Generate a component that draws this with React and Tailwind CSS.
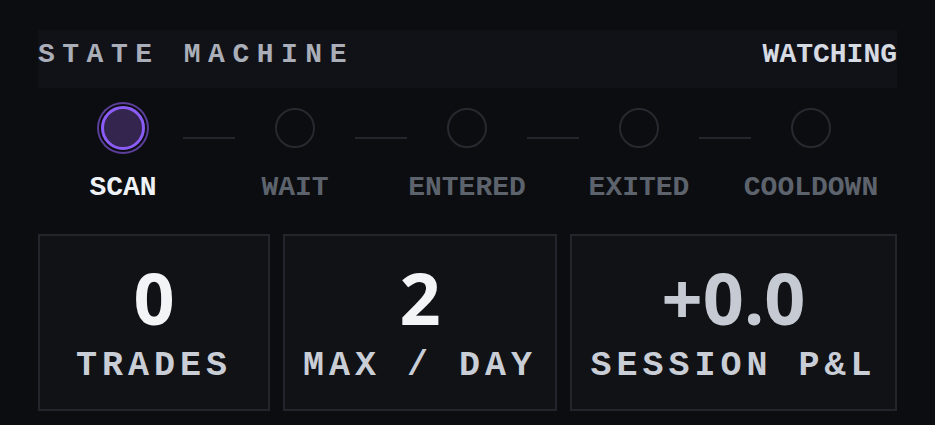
const steps = ['SCAN', 'WAIT', 'ENTERED', 'EXITED', 'COOLDOWN'];

const stats = [
  { value: '0', label: 'TRADES', tone: 'text-[#f3f4f6]' },
  { value: '2', label: 'MAX / DAY', tone: 'text-[#f3f4f6]' },
  { value: '+0.0', label: 'SESSION P&L', tone: 'text-[#c5cad3]' },
];

const mono = "font-['Liberation_Mono',monospace]";

const Step = ({ name, active }) => (
  <div className="flex w-[120px] shrink-0 flex-col items-center">
    <div className="flex h-10 w-10 items-center justify-center">
      {active ? (
        <div className="h-[44px] w-[44px] shrink-0 rounded-full border-[3px] border-[#8b5cf6] bg-[#33254d] shadow-[0_0_0_2px_#0c0d10,0_0_0_4px_#5a3e99]" />
      ) : (
        <div className="h-10 w-10 shrink-0 rounded-full border-2 border-[#262930]" />
      )}
    </div>
    <span
      className={`${mono} mt-[26px] whitespace-nowrap text-[28px] font-bold leading-none ${
        active ? 'text-[#eef1f5]' : 'text-[#5d636d]'
      }`}
    >
      {name}
    </span>
  </div>
);

const StatCard = ({ value, label, tone }) => (
  <div className="flex h-[177px] flex-col items-center border-2 border-[#22252b] bg-[#111216] pt-[25px]">
    <div className={`font-['Noto_Sans',sans-serif] text-[72px] font-bold leading-none ${tone}`}>
      {value}
    </div>
    <div className={`${mono} mt-[16px] whitespace-nowrap text-[35px] font-bold leading-none tracking-[5px] text-[#c9cdd5]`}>
      {label}
    </div>
  </div>
);

export default function App() {
  const current = 0;

  return (
    <div className="min-h-screen bg-[#0c0d10] px-[38px] pt-[30px]">
      <div className="flex h-[58px] items-center justify-between bg-[#111217] pb-2">
        <span className={`${mono} text-[28px] font-bold tracking-[7.5px] text-[#a9aeb8]`}>
          STATE MACHINE
        </span>
        <span className={`${mono} text-[28px] font-bold text-[#d6dae2]`}>WATCHING</span>
      </div>

      <div className="mt-[20px] flex items-start px-[25px]">
        {steps.map((name, i) => (
          <div key={name} className="flex items-start">
            {i > 0 && <div className="mt-[29px] h-[2px] w-[52px] bg-[#23262d]" />}
            <Step name={name} active={i === current} />
          </div>
        ))}
      </div>

      <div className="mt-[32px] grid grid-cols-[232px_274px_1fr] gap-[13px]">
        {stats.map((s) => (
          <StatCard key={s.label} {...s} />
        ))}
      </div>
    </div>
  );
}
